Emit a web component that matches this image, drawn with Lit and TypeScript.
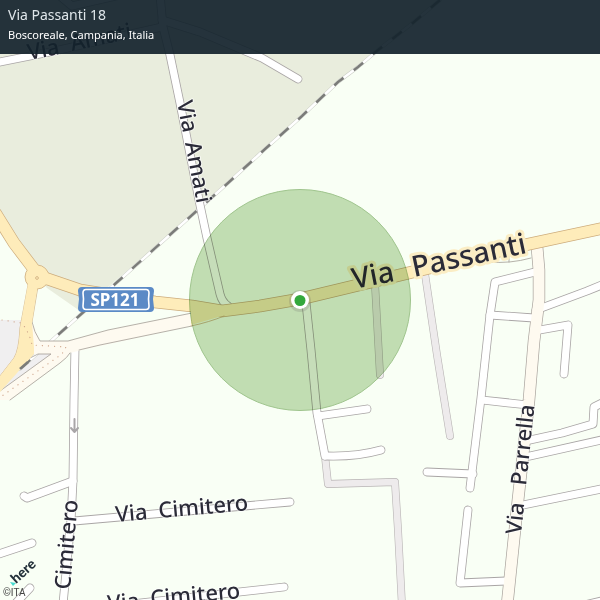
import { LitElement, html, css, svg } from "lit";
import { customElement, property } from "lit/decorators.js";

const RAIL =
  "M440,0 L409,26 L378,50 L358,67 L338,82 L302,116 L264,150 L228,183 L191,216 L115,284 L79,316 L20,369";

const LANES = [
  "M0,62 L50,52 L162,27",
  "M160,-5 L163,27 L170,55 L180,103 L200,205 L207,238 L220,294 Q222,302 228,306",
  "M162,20 L200,32 L262,58 L298,79",
  "M60,-4 L72,6 L160,-14",
  "M306,303 L311,350 L317,413 L325,456",
  "M318,416 L367,409",
  "M326,456 Q356,457 381,450",
  "M75,348 L74,400 L73,480 L71,520 L63,604",
  "M73,481 L27,498 L24,496",
  "M74,521 L290,502",
  "M-4,555 L32,543",
  "M14,605 L30,588",
  "M60,612 L284,587",
  "M535,272 L495,282 L490,315 L481,398 L470,488",
  "M490,315 L534,318",
  "M482,400 L528,405",
  "M427,472 L473,474",
  "M468,510 L460,583 L506,581",
  "M536,310 L587,291 L604,284",
  "M534,331 L568,325 L564,374",
  "M530,440 L562,433 L593,424 L594,407 L606,401",
  "M530,456 L606,439",
  "M523,505 L606,488",
  "M580,606 L606,600",
];

const PATHS = [
  "M425,274 L437,355 L450,436",
  "M375,284 L380,375",
  "M325,456 L328,484 L395,482 L398,530 L402,606",
];

const STREET = "M537,247 L539,270 L539,300 L534,341 L529,400 L518,500 L507,606";

const MAIN =
  "M36,275 L80,290 L155,302 L192,306 L222,311 L260,306 L300,299 L400,275 L520,246 L604,228";
const WEST = "M-4,214 L14,243 L36,272";

interface Label {
  text: string;
  x: number;
  y: number;
  angle: number;
  kind?: string;
}

const LABELS: Label[] = [
  { text: "Via", x: 29, y: 60, angle: -11 },
  { text: "Amati", x: 72, y: 51, angle: -12 },
  { text: "Via", x: 177, y: 102, angle: 79 },
  { text: "Amati", x: 185, y: 143, angle: 79 },
  { text: "Via", x: 116, y: 522, angle: -5 },
  { text: "Cimitero", x: 159, y: 518, angle: -5 },
  { text: "Via", x: 108, y: 611, angle: -5 },
  { text: "Cimitero", x: 151, y: 606, angle: -5 },
  { text: "Cimitero", x: 70, y: 590, angle: -85 },
  { text: "Via", x: 521, y: 535, angle: -84 },
  { text: "Parrella", x: 526, y: 486, angle: -84 },
  { text: "Via", x: 354, y: 289, angle: -11, kind: "major" },
  { text: "Passanti", x: 414, y: 277, angle: -12, kind: "major" },
];

@customElement("street-map")
class StreetMap extends LitElement {
  static styles = css`
    :host { display: block; }
    svg { display: block; width: 100%; height: auto; }
    path { fill: none; stroke-linejoin: round; stroke-linecap: round; }
    .land { fill: #f9fff5; }
    .field { fill: #e9eddd; }
    .plaza { fill: #f0eff0; }
    .rail-edge { stroke: #c9ccc4; stroke-width: 3.6; }
    .rail-bed { stroke: #fff; stroke-width: 2.6; }
    .rail { stroke: #7b7c79; stroke-width: 2.6; stroke-linecap: butt; stroke-dasharray: 12 12.8; }
    .lane-edge { stroke: #a9a5a5; stroke-width: 8.8; }
    .lane { stroke: #fff; stroke-width: 7.2; }
    .path-edge { stroke: #b8b4b4; stroke-width: 7.8; }
    .path { stroke: #eeebec; stroke-width: 6.6; }
    .street-edge { stroke: #a9a39d; stroke-width: 12.4; stroke-linecap: butt; }
    .street { stroke: #fefaf0; stroke-width: 11; stroke-linecap: butt; }
    .cream { fill: #fefaf0; }
    .cream-line { stroke: #a39d96; stroke-width: 0.8; }
    .main-edge { stroke: #cdac7c; stroke-width: 12.6; }
    .main { stroke: #feecba; stroke-width: 11.2; }
    .main-fill { fill: #feecba; }
    .main-line { stroke: #cdac7c; stroke-width: 0.8; }
    .dots { stroke: #cfa68c; stroke-width: 1.2; stroke-dasharray: 0.1 6; }
    .arrow { stroke: #a9a6a8; stroke-width: 2; }
    text { font-family: "Noto Sans", "Open Sans", sans-serif; }
    .name { font-size: 22px; font-weight: 500; fill: #2b2b38; stroke: rgba(255, 255, 255, 0.6); stroke-width: 2px; paint-order: stroke; stroke-linejoin: round; }
    .major { font-size: 29px; stroke: #fbedc4; stroke-width: 6px; }
    .shield { fill: #5b8ac6; }
    .shield-line { fill: none; stroke: #fff; stroke-width: 1.6; }
    .shield-text { font-size: 17px; font-weight: 700; fill: #fff; text-anchor: middle; }
    .area { fill: #c6ddb9; stroke: #a3c493; stroke-width: 1; mix-blend-mode: multiply; }
    .pin-shade { fill: #5a4a5a; fill-opacity: 0.16; }
    .pin-rim { fill: #fff; }
    .pin { fill: #33a83c; }
    .here { font-family: Lato, sans-serif; font-size: 14px; font-weight: 900; fill: #23303a; }
    .teal { fill: #48dad0; }
    .credit { font-family: Roboto, sans-serif; font-size: 10px; fill: #444; }
  `;

  render() {
    return html`
      <svg viewBox="0 0 600 600" role="img" aria-label="Mappa di Via Passanti, Boscoreale">
        <rect class="land" width="600" height="600"></rect>
        <path class="field" d="M0,0 H440 L378,50 L338,82 L191,216 L80,311 L47,288 L36,276 L0,221Z"></path>
        <path class="plaza" d="M0,320 H22 L20,350 L52,354 L0,392Z"></path>
        <path class="rail-edge" d=${RAIL}></path>
        <path class="rail-bed" d=${RAIL}></path>
        <path class="rail" d=${RAIL}></path>

        ${PATHS.map((d) => svg`<path class="path-edge" d=${d}></path>`)}
        ${PATHS.map((d) => svg`<path class="path" d=${d}></path>`)}
        ${LANES.map((d) => svg`<path class="lane-edge" d=${d}></path>`)}
        <path class="street-edge" d=${STREET}></path>
        ${LANES.map((d) => svg`<path class="lane" d=${d}></path>`)}
        <path class="street" d=${STREET}></path>
        <path class="cream-line" d="M488,262 Q510,264 531,258 M509,256 V262"></path>

        <path class="cream" d="M32,322 L40,341 H68 L108,330 L192,313 L204,320 L190,326 L78,351 L70,353 Q68,357 60,363 L10,400 H0 V391 L51,354 H32Z"></path>
        <path class="cream-line" d="M32,322 Q34,332 40,341 H68 L108,330 L192,313 V316 M192,326 L100,345 L79,350 M70,353 Q68,357 60,363 L10,400 M0,391 L51,354 H38 L30,358"></path>

        <path class="main-edge" d=${WEST}></path>
        <path class="main-edge" d=${MAIN}></path>
        <path class="main-line" d="M28,285 L20,328 Q19,350 14,358 L0,376 M38,286 L32,322"></path>
        <circle class="main-fill main-line" cx="37" cy="277" r="12"></circle>
        <path class="main-fill" d="M28,284 L20,328 Q19,350 14,358 L0,376 V392 L34,354 L34,348 L32,322 L38,284Z"></path>
        <path class="main" d=${WEST}></path>
        <path class="main" d=${MAIN}></path>
        <path class="main-fill" d="M191,305 L222,309 V316 L191,325Z"></path>
        <path class="main-line" d="M191,326 Q210,322 224,316"></path>
        <circle class="main-line" fill="none" cx="37" cy="278" r="1.4"></circle>
        <path class="dots" d="M2,320 L22,323 Q30,334 32,345 L66,347 L62,354 L2,396"></path>
        <path class="rail" d="M28,362 L20,369"></path>
        <path class="arrow" d="M74.500,419 V432 M71,428 L74.500,432 L78,428"></path>

        ${LABELS.map(
          (l) => svg`<text class="name ${l.kind ?? ""}" transform="translate(${l.x} ${l.y}) rotate(${l.angle})">${l.text}</text>`
        )}

        <path class="shield" d="M82,287 H150 Q154,287 154,291 L153,299 L154,308 Q154,312 150,312 H82 Q78,312 78,308 L79,299 L78,291 Q78,287 82,287Z"></path>
        <path class="shield-line" d="M86,289.500 H146 Q149,289.500 149,293 L148.500,299 L149,306 Q149,309.500 146,309.500 H86 Q83,309.500 83,306 L83.500,299 L83,293 Q83,289.500 86,289.500Z"></path>
        <text class="shield-text" x="115" y="306">SP121</text>

        <circle class="area" cx="300" cy="300" r="110.500"></circle>
        <circle class="pin-shade" cx="300" cy="301" r="11"></circle>
        <circle class="pin-rim" cx="300" cy="300" r="9"></circle>
        <circle class="pin" cx="300" cy="300.500" r="5.500"></circle>

        <path class="teal" d="M10,582 L16,583 L13,586Z"></path>
        <text class="here" transform="translate(16 584) rotate(-42)">here</text>
        <text class="credit" x="3" y="596">©ITA</text>
      </svg>
    `;
  }
}

@customElement("app-root")
class AppRoot extends LitElement {
  @property() street = "Via Passanti 18";
  @property() place = "Boscoreale, Campania, Italia";

  static styles = css`
    :host { display: grid; font-family: "Noto Sans", "Open Sans", sans-serif; }
    street-map, .bar { grid-area: 1 / 1; }
    .bar {
      z-index: 1;
      align-self: start;
      padding: 5px 8px 11px;
      background: rgba(18, 34, 43, 0.92);
      color: #fff;
    }
    .street { margin: 0; font-size: 14px; line-height: 20px; font-weight: 400; color: #dfe6ea; }
    .place { margin: 2px 0 0; font-size: 11px; line-height: 16px; }
  `;

  render() {
    return html`
      <street-map></street-map>
      <header class="bar">
        <h1 class="street">${this.street}</h1>
        <p class="place">${this.place}</p>
      </header>
    `;
  }
}
